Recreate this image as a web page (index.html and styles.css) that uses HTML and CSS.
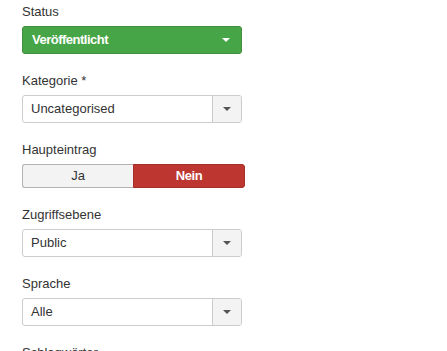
FILE: index.html
```html
<!DOCTYPE html>
<html>
<head>
<meta charset="utf-8">
<link rel="stylesheet" href="styles.css">
</head>
<body>
<div class="form">
  <div class="group">
    <div class="label">Status</div>
    <div class="select select-green">
      <span class="value">Veröffentlicht</span>
      <span class="arrow"><span class="caret"></span></span>
    </div>
  </div>
  <div class="group">
    <div class="label">Kategorie *</div>
    <div class="select">
      <span class="value">Uncategorised</span>
      <span class="arrow"><span class="caret"></span></span>
    </div>
  </div>
  <div class="group">
    <div class="label">Haupteintrag</div>
    <div class="toggle">
      <span class="opt opt-ja">Ja</span>
      <span class="opt opt-nein">Nein</span>
    </div>
  </div>
  <div class="group">
    <div class="label">Zugriffsebene</div>
    <div class="select">
      <span class="value">Public</span>
      <span class="arrow"><span class="caret"></span></span>
    </div>
  </div>
  <div class="group">
    <div class="label">Sprache</div>
    <div class="select">
      <span class="value">Alle</span>
      <span class="arrow"><span class="caret"></span></span>
    </div>
  </div>
  <div class="group">
    <div class="label">Schlagwörter</div>
  </div>
</div>
</body>
</html>
```

FILE: styles.css
```css
html, body {
  margin: 0;
  padding: 0;
  background: #fff;
}
body {
  font-family: "Liberation Sans", Arial, sans-serif;
  font-size: 13px;
  line-height: 18px;
  color: #333;
}
.form {
  padding: 3px 0 0 22px;
  width: 220px;
}
.group {
  margin-bottom: 18px;
}
.label {
  margin-bottom: 5px;
  height: 18px;
}
.select {
  display: flex;
  height: 28px;
  box-sizing: border-box;
  border: 1px solid #ccc;
  border-radius: 3px;
  background: #fff;
  overflow: hidden;
}
.select .value {
  flex: 1;
  padding-left: 8px;
  line-height: 26px;
  color: #333;
}
.select .arrow {
  width: 28px;
  border-left: 1px solid #ccc;
  background: #f3f3f3;
  display: flex;
  align-items: center;
  justify-content: center;
}
.caret {
  width: 0;
  height: 0;
  border-left: 4px solid transparent;
  border-right: 4px solid transparent;
  border-top: 4px solid #555;
}
.select-green {
  background: #46a546;
  border-color: #3f8f3f;
}
.select-green .value {
  color: #fff;
  font-weight: bold;
  letter-spacing: -0.5px;
  padding-left: 9px;
}
.select-green .arrow {
  background: transparent;
  border-left: none;
  width: 31px;
}
.select-green .caret {
  border-top-color: #fff;
}
.toggle {
  display: flex;
  width: 223px;
  height: 24px;
  margin-top: 2px;
}
.opt {
  flex: 1;
  text-align: center;
  line-height: 22px;
  box-sizing: border-box;
}
.opt-ja {
  background: #f3f3f3;
  border: 1px solid #b3b3b3;
  border-right: none;
  border-radius: 3px 0 0 3px;
  color: #333;
}
.opt-nein {
  background: #bd362f;
  border: 1px solid #a52e28;
  border-radius: 0 3px 3px 0;
  color: #fff;
  font-weight: bold;
  letter-spacing: -0.4px;
}
```
